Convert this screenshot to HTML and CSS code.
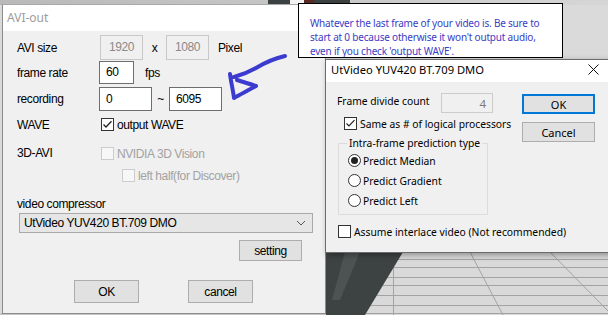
FILE: index.html
```html
<!DOCTYPE html>
<html>
<head>
  <meta charset="utf-8">
  <title>AVI-out</title>
  <link rel="stylesheet" href="styles.css">
</head>
<body>
<div class="desk">

  <!-- 3D viewport behind the dialogs -->
  <svg class="scene" width="608" height="315" viewBox="0 0 608 315">
    <defs>
      <linearGradient id="strip" x1="0" y1="0" x2="1" y2="0">
        <stop offset="0" stop-color="#b9b9b9"/>
        <stop offset="1" stop-color="#d6d6d6"/>
      </linearGradient>
    </defs>
    <rect x="0" y="0" width="608" height="315" fill="#dadada"/>
    <rect x="0" y="0" width="608" height="5" fill="url(#strip)"/>
    <rect x="268" y="0" width="22" height="5" fill="#3b4040"/>
    <rect x="290" y="0" width="14" height="5" fill="#f2f2f2"/>
    <rect x="304" y="0" width="10" height="5" fill="#5a2a22"/>
    <rect x="314" y="0" width="36" height="5" fill="#3b4040"/>
    <rect x="326" y="252" width="282" height="63" fill="#d9d9d9"/>
    <g stroke="#a3a3a3" stroke-width="1">
      <line x1="326" y1="259.5" x2="608" y2="259.5"/>
      <line x1="326" y1="267.5" x2="608" y2="267.5"/>
      <line x1="326" y1="277.5" x2="608" y2="277.5"/>
      <line x1="326" y1="285.5" x2="608" y2="285.5"/>
      <line x1="326" y1="295.5" x2="608" y2="295.5"/>
      <line x1="326" y1="305.5" x2="608" y2="305.5"/>
      <line x1="326" y1="313.5" x2="608" y2="313.5"/>
      <line x1="393.5" y1="252" x2="393.5" y2="315"/>
      <line x1="470" y1="252" x2="503" y2="315"/>
      <line x1="550" y1="252" x2="608" y2="311"/>
    </g>
    <polygon points="326,252 403,252 365,315 326,315" fill="#3d4242"/>
    <polygon points="345,252 360,252 340,300 332,300" fill="#4d5353"/>
    <rect x="0" y="313" width="326" height="2" fill="#c4c4c4"/>
  </svg>

  <!-- AVI-out dialog -->
  <div class="win avi">
    <div class="titlebar"><span class="title dim">AVI-out</span></div>
    <div class="avi-body">
      <div class="row r-size">
        <span class="lbl">AVI size</span>
        <span class="box dis w43 shift">1920</span>
        <span class="mid m23">x</span>
        <span class="box dis w43">1080</span>
        <span class="unit">Pixel</span>
      </div>
      <div class="row r-fps">
        <span class="lbl">frame rate</span>
        <span class="box w35">60</span>
        <span class="unit u-fps">fps</span>
      </div>
      <div class="row r-rec">
        <span class="lbl">recording</span>
        <span class="box w53">0</span>
        <span class="mid m17">~</span>
        <span class="box w53">6095</span>
      </div>
      <div class="row r-wave">
        <span class="lbl">WAVE</span>
        <span class="check on"><svg width="11" height="11" viewBox="0 0 11 11"><path d="M1.5 5.5 L4 8 L9.5 2.2" fill="none" stroke="#222" stroke-width="1.3"/></svg></span>
        <span class="ctext">output WAVE</span>
      </div>
      <div class="row r-3d">
        <span class="lbl">3D-AVI</span>
        <span class="check off"></span>
        <span class="ctext gray">NVIDIA 3D Vision</span>
      </div>
      <div class="row r-half">
        <span class="check off indent"></span>
        <span class="ctext gray">left half(for Discover)</span>
      </div>
      <div class="row r-comp">
        <span>video compressor</span>
      </div>
      <div class="select">
        <span>UtVideo YUV420 BT.709 DMO</span>
        <svg width="10" height="6" viewBox="0 0 10 6"><path d="M1 1 L5 5 L9 1" fill="none" stroke="#555" stroke-width="1"/></svg>
      </div>
      <div class="row r-setting">
        <span class="btn b-setting">setting</span>
      </div>
      <div class="row r-buttons">
        <span class="btn b-main">OK</span>
        <span class="btn b-main">cancel</span>
      </div>
    </div>
  </div>

  <!-- UtVideo settings dialog -->
  <div class="win ut">
    <div class="titlebar ut-title">
      <span class="title">UtVideo YUV420 BT.709 DMO</span>
      <span class="close"><svg width="11" height="11" viewBox="0 0 11 11"><path d="M0.5 0.5 L10.5 10.5 M10.5 0.5 L0.5 10.5" stroke="#111" stroke-width="1"/></svg></span>
    </div>
    <div class="ut-body">
      <div class="ut-left">
        <div class="ut-row fd">
          <span class="fd-lbl">Frame divide count</span>
          <span class="ubox">4</span>
        </div>
        <div class="ut-row same">
          <span class="ucheck"><svg width="11" height="11" viewBox="0 0 11 11"><path d="M1.5 5.5 L4 8 L9.5 2.2" fill="none" stroke="#222" stroke-width="1.2"/></svg></span>
          <span>Same as # of logical processors</span>
        </div>
        <fieldset class="group">
          <legend>Intra-frame prediction type</legend>
          <div class="ut-row radio-row"><span class="radio sel"></span><span>Predict Median</span></div>
          <div class="ut-row radio-row"><span class="radio"></span><span>Predict Gradient</span></div>
          <div class="ut-row radio-row"><span class="radio"></span><span>Predict Left</span></div>
        </fieldset>
        <div class="ut-row interlace">
          <span class="ucheck"></span>
          <span>Assume interlace video (Not recommended)</span>
        </div>
      </div>
      <div class="ut-right">
        <span class="ubtn default">OK</span>
        <span class="ubtn">Cancel</span>
      </div>
    </div>
  </div>

  <!-- tooltip over the recording field -->
  <div class="tip">
    Whatever the last frame of your video is. Be sure to<br>
    start at 0 because otherwise it won't output audio,<br>
    even if you check 'output WAVE'.
  </div>

  <!-- hand-drawn arrow -->
  <svg class="arrow" width="608" height="315" viewBox="0 0 608 315">
    <path d="M285 56 C276 58 266 62 256 68 C249 72 242 75 234 77 M230 74 C231 82 233 90 234 98 C241 94 249 90 256 86 C250 84 243 82 237 80" fill="none" stroke="#3b3bd0" stroke-width="4" stroke-linecap="round" stroke-linejoin="round"/>
  </svg>

</div>
</body>
</html>
```

FILE: styles.css
```css
/* Reset */
body {
    margin: 0;
    padding: 0;
}

* {
    box-sizing: border-box;
}

.desk {
    position: relative;
    width: 608px;
    height: 315px;
    overflow: hidden;
    background-color: #dadada;
}

.scene {
    position: absolute;
    left: 0;
    top: 0;
}

.arrow {
    position: absolute;
    left: 0;
    top: 0;
    pointer-events: none;
}

/* Windows on the desktop */
.win {
    position: absolute;
    background-color: #f0f0f0;
    display: flex;
    flex-direction: column;
}

.titlebar {
    background-color: #fff;
    display: flex;
    align-items: center;
    font-family: "Noto Sans", sans-serif;
    font-size: 12px;
}

.title.dim {
    color: #9c9c9c;
}

/* AVI-out dialog */
.avi {
    left: 2px;
    top: 4px;
    width: 324px;
    height: 310px;
    border: 1px solid #8c8c8c;
    border-top-color: #a8a8a8;
}

.avi .titlebar {
    height: 26px;
    padding-left: 4px;
    padding-bottom: 2px;
}

.avi-body {
    flex: 1;
    padding-left: 14px;
    font-family: "Liberation Sans", Arial, sans-serif;
    font-size: 12px;
    letter-spacing: -0.4px;
    color: #000;
}

.row {
    display: flex;
    align-items: center;
}

.lbl {
    width: 82px;
    flex: none;
}

.r-size { margin-top: 4px; height: 25px; }
.r-fps { margin-top: 1px; height: 23px; }
.r-rec { margin-top: 3px; height: 24px; }
.r-wave { margin-top: 7px; height: 13px; }
.r-3d { margin-top: 16px; height: 13px; }
.r-half { margin-top: 9px; height: 13px; }
.r-comp { margin-top: 15px; height: 14px; }
.r-setting { margin-top: 7px; height: 21px; }
.r-buttons { margin-top: 19px; height: 23px; }

.r-3d .lbl {
    margin-top: -2px;
}

.box {
    height: 100%;
    border: 1px solid #6e6e6e;
    background-color: #fff;
    display: flex;
    align-items: center;
    padding-left: 6px;
    padding-bottom: 1px;
}

.box.dis {
    border-color: #c8c8c8;
    background-color: #f0f0f0;
    color: #8a8a8a;
    justify-content: center;
    padding-left: 0;
}

.shift { margin-left: 1px; }
.w43 { width: 43px; }
.w35 { width: 35px; }
.w53 { width: 53px; }

.mid {
    text-align: center;
    flex: none;
}

.m23 { width: 23px; }
.m17 { width: 17px; }

.unit {
    margin-left: 9px;
}

.u-fps {
    margin-left: 11px;
}

.check {
    width: 13px;
    height: 13px;
    flex: none;
    border: 1px solid #333;
    background-color: #fff;
    margin-left: 2px;
    display: flex;
    align-items: center;
    justify-content: center;
}

.check.off {
    border-color: #cccccc;
    background-color: #f7f7f7;
}

.check.indent {
    margin-left: 105px;
}

.ctext {
    margin-left: 3px;
}

.gray {
    color: #a2a2a2;
}

.select {
    margin-top: 2px;
    margin-left: 2px;
    width: 294px;
    height: 20px;
    border: 1px solid #a9a9a9;
    background-color: #e6e6e6;
    display: flex;
    align-items: center;
    justify-content: space-between;
    padding: 0 6px 1px 4px;
}

.btn {
    border: 1px solid #adadad;
    background-color: #e1e1e1;
    display: flex;
    align-items: center;
    justify-content: center;
    height: 100%;
}

.b-setting {
    width: 63px;
    margin-left: 222px;
}

.b-main {
    width: 65px;
}

.b-main:first-child {
    margin-left: 57px;
}

.b-main + .b-main {
    margin-left: 49px;
}

/* UtVideo dialog */
.ut {
    left: 325px;
    top: 59px;
    width: 292px;
    height: 194px;
    border: 1px solid #6b6b6b;
    box-shadow: 2px 2px 6px rgba(0, 0, 0, 0.35);
    font-family: "Noto Sans", sans-serif;
    font-size: 10.3px;
    color: #000;
    white-space: nowrap;
}

.ut-title {
    height: 22px;
    padding-left: 5px;
    padding-bottom: 3px;
    justify-content: space-between;
    font-size: 11.2px;
}

.close {
    width: 46px;
    height: 19px;
    display: flex;
    align-items: center;
    justify-content: center;
}

.ut-body {
    flex: 1;
    display: flex;
}

.ut-left {
    width: 196px;
    padding-left: 11px;
}

.ut-row {
    display: flex;
    align-items: center;
}

.fd {
    margin-top: 11px;
    height: 20px;
}

.fd-lbl {
    width: 104px;
    margin-top: -4px;
}

.ubox {
    width: 52px;
    height: 20px;
    border: 1px solid #cccccc;
    background-color: #f0f0f0;
    color: #7a7a7a;
    display: flex;
    align-items: center;
    justify-content: flex-end;
    padding-right: 6px;
    font-size: 11.5px;
}

.same {
    margin-top: 4px;
    height: 13px;
    padding-left: 7px;
}

.ucheck {
    width: 13px;
    height: 13px;
    flex: none;
    border: 1px solid #333;
    background-color: #fff;
    margin-right: 3px;
    display: flex;
    align-items: center;
    justify-content: center;
}

.group {
    margin: 6px 0 0 1px;
    width: 150px;
    min-width: 0;
    border: 1px solid #dcdcdc;
    padding: 4px 0 7px 9px;
}

.group legend {
    padding: 0 2px;
    margin-left: -1px;
    line-height: 14px;
}

.radio-row {
    height: 13px;
}

.radio-row + .radio-row {
    margin-top: 7px;
}

.radio {
    width: 13px;
    height: 13px;
    flex: none;
    border: 1px solid #333;
    border-radius: 50%;
    background-color: #fff;
    margin-right: 2px;
    display: flex;
    align-items: center;
    justify-content: center;
}

.radio.sel::after {
    content: "";
    width: 7px;
    height: 7px;
    border-radius: 50%;
    background-color: #222;
}

.interlace {
    margin-top: 10px;
    height: 13px;
    padding-left: 1px;
}

.ut-right {
    display: flex;
    flex-direction: column;
    padding-top: 12px;
}

.ubtn {
    width: 73px;
    height: 20px;
    border: 1px solid #adadad;
    background-color: #e1e1e1;
    display: flex;
    align-items: center;
    justify-content: center;
    font-size: 11px;
}

.ubtn.default {
    border: 2px solid #0078d7;
}

.ubtn + .ubtn {
    margin-top: 8px;
}

/* Tooltip */
.tip {
    position: absolute;
    left: 298px;
    top: 3px;
    width: 265px;
    height: 55px;
    border: 1px solid #000;
    background-color: #fff;
    color: #3c3cc4;
    font-family: "Noto Sans", sans-serif;
    font-size: 10px;
    letter-spacing: -0.2px;
    line-height: 14px;
    padding: 12px 0 0 11px;
    white-space: nowrap;
    overflow: hidden;
}
```
